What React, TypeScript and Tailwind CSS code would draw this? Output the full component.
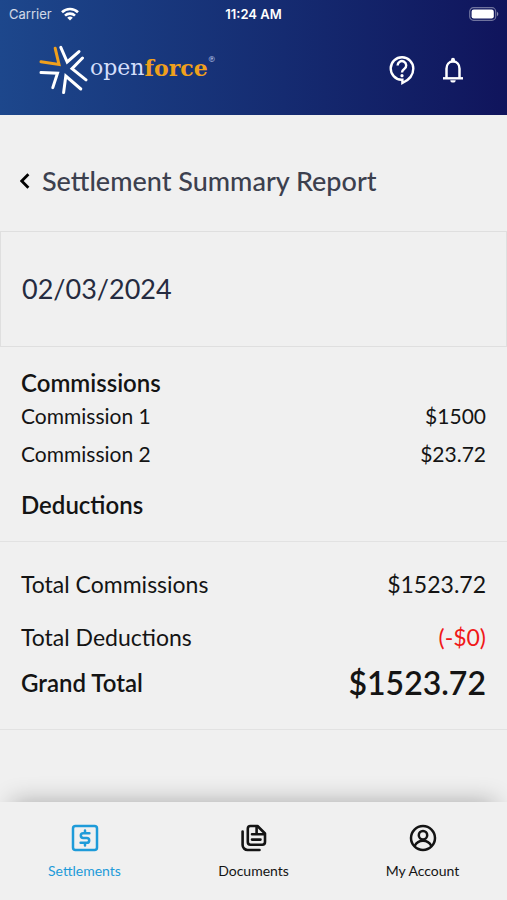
import { type ReactNode } from "react";
import clsx from "clsx";

const commissions = [
  { label: "Commission 1", amount: "$1500" },
  { label: "Commission 2", amount: "$23.72" },
];

function LogoMark() {
  return (
    <svg width="50" height="52" viewBox="38 44 50 52" fill="none" stroke="#fff" strokeWidth="3" strokeLinecap="round" aria-hidden="true">
      <path d="M41 61.7 59 64.5 55.2 48.3" stroke="#f0a01c" />
      <path d="M60.8 47.3 67.2 62 79 51.6" />
      <path d="M82.5 58 72 68.6 86 79.8" />
      <path d="M80.8 89 65.8 76 63.6 92.6" />
      <path d="M41 72.6 57.5 73.2 52.8 87.6" />
    </svg>
  );
}

function SupportIcon() {
  return (
    <svg width="28" height="30" viewBox="0 0 28 30" fill="none" stroke="#fff" strokeWidth="2.4" aria-hidden="true">
      <path d="M13.4 24.8A11.3 11.3 0 1 1 25.3 13.4C25.3 19.6 20.8 25 14.4 28V24.8Z" />
      <path d="M9.6 10.4A4.3 4.3 0 1 1 16.2 14C14.7 15 14 15.7 14 17.6" />
      <circle cx="14" cy="20.7" r="1.6" fill="#fff" stroke="none" />
    </svg>
  );
}

function BellIcon() {
  return (
    <svg width="22" height="26" viewBox="0 0 22 26" fill="none" stroke="#fff" strokeWidth="2.5" aria-hidden="true">
      <path d="M4.5 21V11.8C4.5 7.6 7.2 4.6 11 4.6S17.5 7.6 17.5 11.8V21" />
      <path d="M1 21.3H21" strokeWidth="2.4" />
      <path d="M9 4.5V2.8A2 2 0 0 1 13 2.8V4.5Z" fill="#fff" stroke="none" />
      <path d="M8.3 23.2H13.7A2.7 2.4 0 0 1 8.3 23.2Z" fill="#fff" stroke="none" />
    </svg>
  );
}

function SettlementsIcon() {
  return (
    <svg width="28" height="28" viewBox="0 0 28 28" fill="none" stroke="currentColor" strokeWidth="2.5" strokeLinecap="round" strokeLinejoin="round" aria-hidden="true">
      <rect x="2" y="2" width="24" height="24" rx="2.5" />
      <path d="M18.4 9.2H12.2A2.4 2.4 0 0 0 12.2 14H15.8A2.4 2.4 0 0 1 15.8 18.8H9.6M14 6.6V9M14 19V21.4" />
    </svg>
  );
}

function DocumentsIcon() {
  return (
    <svg width="28" height="28" viewBox="0 0 28 28" fill="none" stroke="currentColor" strokeWidth="2.6" strokeLinecap="round" strokeLinejoin="round" aria-hidden="true">
      <path d="M10.5 2H17.5L25 9.5V18A2.7 2.7 0 0 1 22.3 20.7H10.5A2.7 2.7 0 0 1 7.8 18V4.7A2.7 2.7 0 0 1 10.5 2Z" />
      <path d="M16.6 2.5V10.3H24.5M12 10.3H16M12 15.6H20.5" />
      <path d="M2.6 7.5V21A5 5 0 0 0 7.6 26H19.5" />
    </svg>
  );
}

function AccountIcon() {
  return (
    <svg width="28" height="28" viewBox="0 0 28 28" fill="none" stroke="currentColor" strokeWidth="2.5" aria-hidden="true">
      <circle cx="14" cy="14" r="12" />
      <circle cx="14" cy="11.2" r="4.2" />
      <path d="M5.6 22C7.4 18.6 10.4 16.8 14 16.8S20.6 18.6 22.4 22" />
    </svg>
  );
}

function StatusBar() {
  return (
    <div className="grid h-7 grid-cols-3 items-center px-2 font-['Inter',sans-serif] text-[13px] leading-4 text-white">
      <div className="flex items-center gap-2 text-white/80">
        <span className="pl-px">Carrier</span>
        <svg width="20" height="14" viewBox="0 0 18 14" fill="none" stroke="#fff" strokeWidth="2.6" aria-label="Wi-Fi">
          <path d="M1 5.2A11.5 11.5 0 0 1 17 5.2M4 8.6A7.2 7.2 0 0 1 14 8.6" />
          <path d="M9 13.6 6.2 10.8A4 4 0 0 1 11.8 10.8Z" fill="#fff" stroke="none" />
        </svg>
      </div>
      <span className="text-center font-semibold">11:24 AM</span>
      <svg className="justify-self-end" width="30" height="14" viewBox="0 0 30 14" aria-label="Battery">
        <rect x="0.7" y="0.7" width="26" height="12.6" rx="3.8" fill="none" stroke="#fff" strokeOpacity="0.4" strokeWidth="1.2" />
        <rect x="2.6" y="2.6" width="22.2" height="8.8" rx="2.2" fill="#fff" />
        <path d="M28 4.8A2.5 2.5 0 0 1 28 9.2Z" fill="#fff" fillOpacity="0.5" />
      </svg>
    </div>
  );
}

function Header() {
  return (
    <header className="h-[115px] bg-linear-to-r from-[#1d478c] to-[#10145c]">
      <StatusBar />
      <div className="flex items-center justify-between pt-4 pr-[43px] pl-[38px]">
        <a href="#" className="flex items-center gap-[2px]">
          <LogoMark />
          <span className="flex pb-1 font-['DejaVu_Serif',serif] text-[22px] leading-7 text-[#d3defa]">
            open<b className="text-[#f0a01c]">force</b>
            <span className="text-[8px] leading-3">®</span>
          </span>
        </a>
        <div className="flex items-center gap-[26px]">
          <button type="button" aria-label="Help">
            <SupportIcon />
          </button>
          <button type="button" aria-label="Notifications">
            <BellIcon />
          </button>
        </div>
      </div>
    </header>
  );
}

function Row({ label, children, className }: { label: string; children: ReactNode; className?: string }) {
  return (
    <div className={clsx("flex items-center justify-between", className)}>
      <dt>{label}</dt>
      <dd>{children}</dd>
    </div>
  );
}

function NavItem({ icon, label, active }: { icon: ReactNode; label: string; active?: boolean }) {
  return (
    <a
      href="#"
      aria-current={active ? "page" : undefined}
      className={clsx("flex flex-1 flex-col items-center gap-[9px] pt-[22px] text-[14px] leading-5", active ? "text-[#1e9bd9]" : "text-[#141414]")}
    >
      {icon}
      <span>{label}</span>
    </a>
  );
}

export default function App() {
  return (
    <div className="flex min-h-screen flex-col bg-[#f0f0f0] font-['Lato',sans-serif] text-[#141414]">
      <Header />

      <main className="flex-1">
        <div className="flex h-[116px] items-center gap-3 px-5 pt-4">
          <button type="button" aria-label="Back">
            <svg width="10" height="16" viewBox="0 0 10 16" fill="none" stroke="#000" strokeWidth="2.8" aria-hidden="true">
              <path d="M8.4 1.2 1.7 8 8.4 14.8" />
            </svg>
          </button>
          <h1 className="text-[27px] leading-8 font-medium text-[#3c404e]">Settlement Summary Report</h1>
        </div>

        <div className="flex h-[116px] items-center border border-[#dfdfdf] px-[21px] text-[27px] leading-8 text-[#252b40]">
          02/03/2024
        </div>

        <section className="border-b border-[#e2e2e2] px-[21px] pt-5 pb-5">
          <h2 className="text-2xl leading-8 font-semibold">Commissions</h2>
          <dl className="flex flex-col gap-1 text-[21px] leading-[34px]">
            {commissions.map((c) => (
              <Row key={c.label} label={c.label}>
                {c.amount}
              </Row>
            ))}
          </dl>
          <h2 className="mt-[18px] text-2xl leading-8 font-semibold">Deductions</h2>
        </section>

        <dl className="border-b border-[#e2e2e2] px-[21px] pt-[26px] pb-[30px] text-[23px] leading-8">
          <Row label="Total Commissions">$1523.72</Row>
          <Row label="Total Deductions" className="mt-[21px]">
            <span className="text-[#f01818]">(-$0)</span>
          </Row>
          <Row label="Grand Total" className="mt-[14px] text-2xl leading-8 font-semibold">
            <span className="block text-[32px] leading-8">$1523.72</span>
          </Row>
        </dl>
      </main>

      <nav className="flex h-[98px] bg-[#f0f0f0] shadow-[0_-12px_24px_-12px_rgba(0,0,0,0.3)]">
        <NavItem icon={<SettlementsIcon />} label="Settlements" active />
        <NavItem icon={<DocumentsIcon />} label="Documents" />
        <NavItem icon={<AccountIcon />} label="My Account" />
      </nav>
    </div>
  );
}
